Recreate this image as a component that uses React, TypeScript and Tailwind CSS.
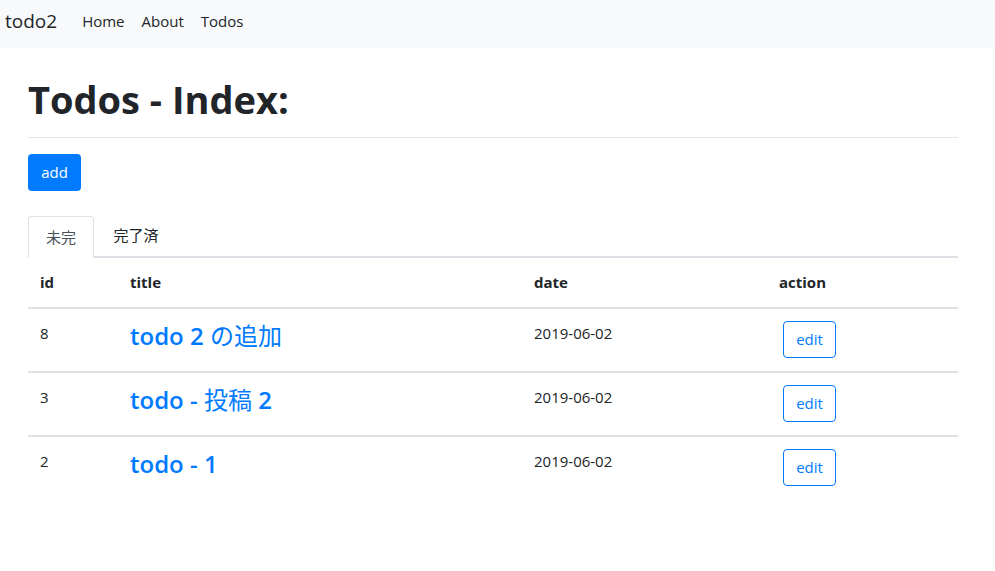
import React from "react";

const rows = [
  { id: 8, title: "todo 2 の追加", date: "2019-06-02" },
  { id: 3, title: "todo - 投稿 2", date: "2019-06-02" },
  { id: 2, title: "todo - 1", date: "2019-06-02" },
];

function Title({ text }: { text: string }) {
  const parts = text.split(/([\u3040-\u30ff\u4e00-\u9fff]+)/).filter((p) => p.length > 0);
  return (
    <span className="text-[24px] leading-[1.2] text-[#007bff]">
      {parts.map((p, i) =>
        /[\u3040-\u30ff\u4e00-\u9fff]/.test(p) ? (
          <span key={i} className="font-normal">{p}</span>
        ) : (
          <span key={i} className="font-semibold">{p}</span>
        )
      )}
    </span>
  );
}

export default function App() {
  return (
    <div
      className="min-h-[571px] bg-white text-[#212529]"
      style={{ fontFamily: '"Open Sans", "Noto Sans CJK JP", sans-serif' }}
    >
      <nav className="h-12 bg-[#f8f9fa] flex items-start pt-[9px]">
        <span className="ml-[5px] text-[19px] text-[#212529] leading-[24px]">todo2</span>
        <div className="ml-[25px] flex items-center gap-[17px] text-[15px] text-[#212529] leading-[24px]">
          <span>Home</span>
          <span>About</span>
          <span>Todos</span>
        </div>
      </nav>
      <div className="px-7 w-[986px]">
        <h1 className="pt-[29px] text-[38px] font-bold leading-[1.2] text-[#212529]">Todos - Index:</h1>
        <div className="mt-[14px] border-t border-[#e5e5e5]" />
        <button className="mt-4 h-[37px] w-[53px] rounded bg-[#007bff] text-white text-[15px]">add</button>
        <div className="mt-[25px] flex border-b-2 border-[#dee2e6] h-[42px]">
          <div className="w-[66px] border border-[#dee2e6] border-b-0 rounded-t -mb-[2px] bg-white flex items-center justify-center text-[15px] text-[#495057]">
            未完
          </div>
          <div className="w-[84px] flex items-center justify-center text-[15px] text-[#212529]">完了済</div>
        </div>
        <table className="w-[930px] border-collapse text-[15px]">
          <thead>
            <tr className="h-[50px] border-b-2 border-[#dee2e6] text-left">
              <th className="w-[90px] px-3 font-bold">id</th>
              <th className="w-[404px] px-3 font-bold">title</th>
              <th className="w-[245px] px-3 font-bold">date</th>
              <th className="w-[191px] px-3 font-bold">action</th>
            </tr>
          </thead>
          <tbody>
            {rows.map((r, i) => (
              <tr key={r.id} className={i < rows.length - 1 ? "h-[64px] border-b-2 border-[#dee2e6]" : "h-[64px]"}>
                <td className="px-3 pt-[14px] align-top leading-[1.4]">{r.id}</td>
                <td className="px-3 pt-[13px] align-top">
                  <Title text={r.title} />
                </td>
                <td className="px-3 pt-[14px] align-top leading-[1.4]">{r.date}</td>
                <td className="px-3 pt-[12px] align-top">
                  <button className="ml-1 h-[37px] w-[53px] rounded border border-[#007bff] text-[#007bff] text-[15px]">
                    edit
                  </button>
                </td>
              </tr>
            ))}
          </tbody>
        </table>
      </div>
    </div>
  );
}
